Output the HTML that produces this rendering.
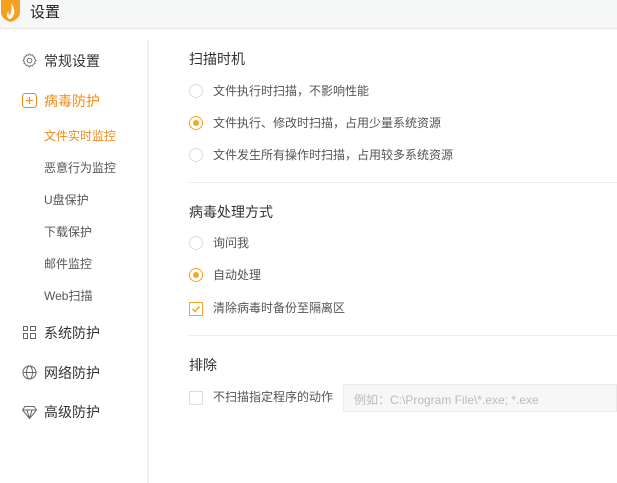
<!DOCTYPE html>
<html><head><meta charset="utf-8"><style>
*{margin:0;padding:0;box-sizing:border-box}
body{width:617px;height:483px;background:#fff;font-family:"Liberation Sans","Noto Sans CJK SC",sans-serif;color:#333;position:relative;overflow:hidden}
.hdr{position:absolute;left:0;top:0;width:617px;height:29px;background:#f6f7f7;border-bottom:1px solid #e8e8e8}
.hdr .t{position:absolute;left:30px;top:1px;font-size:15px;color:#222}
.a{position:absolute;white-space:nowrap}
.m{font-size:14px;color:#333;left:44px}
.s{font-size:12px;color:#555;left:44px}
.vl{position:absolute;left:147px;top:40px;width:2px;height:443px;background:#efefef}
.h{font-size:14px;color:#333;left:189px}
.o{font-size:12px;color:#555;left:213px}
.r{position:absolute;left:189px;width:14px;height:14px;border:1px solid #ddd;border-radius:50%}
.r.on{border-color:#f5a623}
.r.on::after{content:"";position:absolute;left:3px;top:3px;width:6px;height:6px;border-radius:50%;background:#f5a623}
.cb{position:absolute;left:189px;width:14px;height:14px;border:1px solid #ddd}
.sep{position:absolute;left:189px;width:428px;height:1px;background:#ebebeb}
</style></head><body>
<div class="hdr">
<svg style="position:absolute;left:0;top:-1px" width="22" height="24" viewBox="0 0 22 24"><path d="M1 1 L20 1 L20 13 Q20 20 10.5 23 Q1 20 1 13Z" fill="#f5a020"/><path d="M11 4 Q16 11 13.5 16 Q12 20 9 20 Q5 17 8.5 12 Q8 16 10 16 Q12.5 10 11 4Z" fill="#fff"/></svg>
<div class="t">设置</div></div>
<svg class="a" style="left:22px;top:53px" width="15" height="15" viewBox="0 0 16 16"><circle cx="8" cy="8" r="2.5" fill="none" stroke="#666"/><path d="M8 1.5l1.5 1.6 2.1-.4.7 2 2 .8-.4 2.1L15.5 9l-1.6 1.5.4 2.1-2 .7-.8 2-2.1-.4L8 16.5 6.5 14.9l-2.1.4-.7-2-2-.8.4-2.1L.5 9 2.1 7.5 1.7 5.4l2-.7.8-2 2.1.4z" transform="scale(.93) translate(.6 -.5)" fill="none" stroke="#666"/></svg>
<div class="a m" style="top:51px">常规设置</div>
<svg class="a" style="left:22px;top:93px" width="15" height="15" viewBox="0 0 15 15"><rect x=".5" y=".5" width="14" height="14" rx="3" fill="none" stroke="#f08a17"/><path d="M7.5 4v7M4 7.5h7" stroke="#f08a17"/></svg>
<div class="a m" style="top:91px;color:#f08a17">病毒防护</div>
<div class="a s" style="top:127px;color:#f08a17">文件实时监控</div>
<div class="a s" style="top:159px">恶意行为监控</div>
<div class="a s" style="top:191px">U盘保护</div>
<div class="a s" style="top:223px">下载保护</div>
<div class="a s" style="top:255px">邮件监控</div>
<div class="a s" style="top:287px">Web扫描</div>
<svg class="a" style="left:23px;top:326px" width="13" height="13" viewBox="0 0 13 13" fill="none" stroke="#666"><rect x=".5" y=".5" width="4" height="4"/><rect x=".5" y="7.5" width="4" height="5"/><rect x="7.5" y=".5" width="5" height="4"/><rect x="7.5" y="7.5" width="5" height="5"/></svg>
<div class="a m" style="top:323px">系统防护</div>
<svg class="a" style="left:22px;top:365px" width="15" height="15" viewBox="0 0 15 15" fill="none" stroke="#666"><circle cx="7.5" cy="7.5" r="6.5"/><ellipse cx="7.5" cy="7.5" rx="3" ry="6.5"/><path d="M1 7.5h13"/></svg>
<div class="a m" style="top:363px">网络防护</div>
<svg class="a" style="left:22px;top:406px" width="15" height="13" viewBox="0 0 15 13" fill="none" stroke="#666"><path d="M3 .5h9l2.5 3.5L7.5 12.5.5 4z M.5 4h14 M5 4l2.5 8.5L10 4"/></svg>
<div class="a m" style="top:402px">高级防护</div>
<div class="vl"></div>

<div class="a h" style="top:49px">扫描时机</div>
<div class="r" style="top:84px"></div><div class="a o" style="top:82px">文件执行时扫描，不影响性能</div>
<div class="r on" style="top:116px"></div><div class="a o" style="top:114px">文件执行、修改时扫描，占用少量系统资源</div>
<div class="r" style="top:148px"></div><div class="a o" style="top:146px">文件发生所有操作时扫描，占用较多系统资源</div>
<div class="sep" style="top:182px"></div>
<div class="a h" style="top:202px">病毒处理方式</div>
<div class="r" style="top:236px"></div><div class="a o" style="top:234px">询问我</div>
<div class="r on" style="top:268px"></div><div class="a o" style="top:266px">自动处理</div>
<div class="cb" style="top:302px;border-color:#f5a623"><svg style="position:absolute;left:1px;top:1px" width="10" height="10" viewBox="0 0 10 10"><path d="M1.5 5l2.5 2.5 4.5-5" fill="none" stroke="#f5a623" stroke-width="1.5"/></svg></div>
<div class="a o" style="top:299px">清除病毒时备份至隔离区</div>
<div class="sep" style="top:335px"></div>
<div class="a h" style="top:355px">排除</div>
<div class="cb" style="top:391px"></div>
<div class="a o" style="top:388px">不扫描指定程序的动作</div>
<div class="a" style="left:343px;top:384px;width:274px;height:28px;background:#f7f7f7;border:1px solid #ececec;font-size:12px;color:#bbb;padding:6px 0 0 10px">例如：C:\Program File\*.exe; *.exe</div>
</body></html>
